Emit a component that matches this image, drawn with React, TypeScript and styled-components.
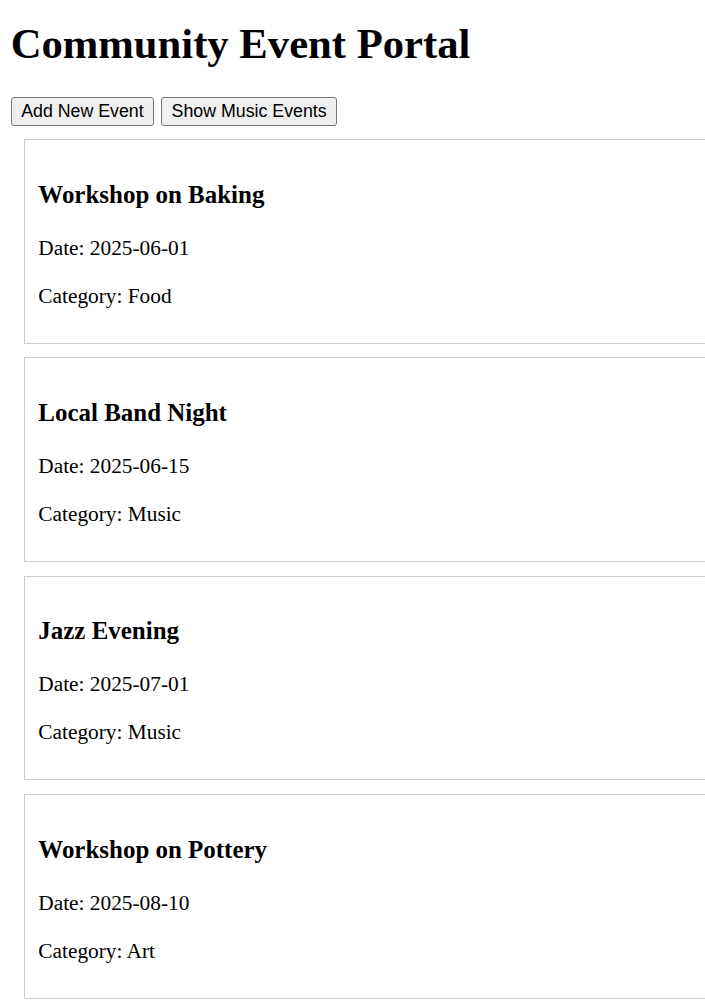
import React from "react";
import styled, { createGlobalStyle } from "styled-components";

const GlobalStyle = createGlobalStyle`
  html, body {
    margin: 0;
    padding: 0;
    background: #ffffff;
    overflow: hidden;
  }
  body {
    font-family: "Liberation Serif", "Times New Roman", serif;
    color: #000000;
  }
`;

const Page = styled.div`
  padding: 0 10.67px;
`;

const Title = styled.h1`
  font-family: "Liberation Serif", "Times New Roman", serif;
  font-size: 42.67px;
  font-weight: bold;
  line-height: normal;
  margin: 19px 0 29px;
`;

const Toolbar = styled.div`
  display: flex;
  gap: 7px;
  align-items: flex-start;
`;

const Button = styled.button`
  font-family: "Liberation Sans", Arial, sans-serif;
  font-size: 17.78px;
  line-height: 21px;
  height: 29px;
  padding: 0 9.5px;
  color: #000000;
  background: #efefef;
  border: 1px solid #767676;
  border-radius: 3px;
  cursor: pointer;
`;

const Card = styled.div`
  margin: 13.33px;
  padding: 13.33px;
  border: 1px solid #cccccc;
  width: 100%;
`;

const CardTitle = styled.h3`
  font-size: 24.96px;
  font-weight: bold;
  line-height: normal;
  margin: 27.5px 0 26px;
`;

const Line = styled.p<{ $last?: boolean }>`
  font-size: 21.33px;
  line-height: 26.67px;
  margin: 0 0 ${(p) => (p.$last ? "20px" : "21.33px")};
`;

const events = [
  { title: "Workshop on Baking", date: "2025-06-01", category: "Food" },
  { title: "Local Band Night", date: "2025-06-15", category: "Music" },
  { title: "Jazz Evening", date: "2025-07-01", category: "Music" },
  { title: "Workshop on Pottery", date: "2025-08-10", category: "Art" },
];

export default function App() {
  return (
    <>
      <GlobalStyle />
      <Page>
        <Title>Community Event Portal</Title>
        <Toolbar>
          <Button>Add New Event</Button>
          <Button>Show Music Events</Button>
        </Toolbar>
        {events.map((e) => (
          <Card key={e.title}>
            <CardTitle>{e.title}</CardTitle>
            <Line>Date: {e.date}</Line>
            <Line $last>Category: {e.category}</Line>
          </Card>
        ))}
      </Page>
    </>
  );
}
